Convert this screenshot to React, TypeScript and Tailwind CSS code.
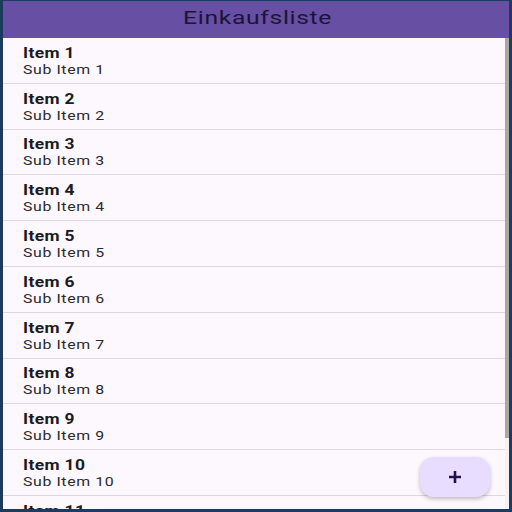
import React from "react";

export default function App() {
  const items = Array.from({ length: 11 }, (_, i) => i + 1);
  return (
    <div
      className="w-[512px] h-[512px] bg-[#1d3b5e] pl-[3px] pr-[3px] pt-[1px] pb-[3px] overflow-hidden"
      style={{ fontFamily: "Roboto, 'Noto Sans', sans-serif" }}
    >
      <div className="relative w-full h-full flex flex-col bg-[#fdf8fd] overflow-hidden">
        <div className="h-[37px] shrink-0 bg-[#674fa3] flex items-center justify-center pb-[4px]">
          <span className="inline-block text-[19px] leading-[22px] text-[#1b1436] tracking-[0.5px] scale-x-[1.3] pl-[2px]">Einkaufsliste</span>
        </div>
        <div className="flex flex-1 min-h-0">
          <div className="flex-1 min-w-0 overflow-hidden">
            {items.map((n) => (
              <div
                key={n}
                className="h-[45.8px] border-b border-[#dcd8dc] flex flex-col justify-center pl-[20px] pt-[2px]"
              >
                <div className="text-[14.5px] font-bold text-[#1c1b1f] leading-[16px] tracking-[0.3px] scale-x-[1.2] origin-left">Item {n}</div>
                <div className="text-[13px] text-[#2a282d] leading-[15px] tracking-[0.5px] scale-x-[1.22] origin-left">Sub Item {n}</div>
              </div>
            ))}
          </div>
          <div className="w-[4px] shrink-0 bg-[#f4f0f4] flex flex-col">
            <div className="h-[400px] bg-[#a8a8a8]" />
          </div>
        </div>
        <div className="absolute left-[417px] top-[456px] w-[70px] h-[40px] rounded-[14px] bg-[#e9ddff] shadow-[0_2px_4px_rgba(0,0,0,0.25)] flex items-center justify-center">
          <svg width="16" height="16" viewBox="0 0 16 16">
            <path d="M8 2v12M2 8h12" stroke="#1f1147" strokeWidth="2.6" />
          </svg>
        </div>
      </div>
    </div>
  );
}
